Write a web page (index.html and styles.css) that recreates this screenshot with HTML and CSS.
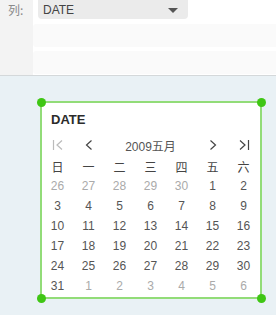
FILE: index.html
```html
<!DOCTYPE html>
<html>
<head>
<meta charset="utf-8">
<link rel="stylesheet" href="styles.css">
</head>
<body>
<div class="top">
  <div class="side"><span class="label">列:</span></div>
  <div class="main">
    <div class="select"><span>DATE</span><span class="caret"></span></div>
    <div class="row"></div>
    <div class="row"></div>
  </div>
</div>
<div class="canvas">
  <div class="card">
    <span class="dot tl"></span><span class="dot tr"></span><span class="dot bl"></span><span class="dot br"></span>
    <div class="title">DATE</div>
    <div class="grid">
      <div class="nav dis"><svg width="12" height="12" viewBox="0 0 12 12"><path d="M1.5 1v10M10 1.5L5 6l5 4.5" fill="none" stroke="currentColor" stroke-width="1.2"/></svg></div>
      <div class="nav"><svg width="12" height="12" viewBox="0 0 12 12"><path d="M8.5 1.5L3.5 6l5 4.5" fill="none" stroke="currentColor" stroke-width="1.2"/></svg></div>
      <div class="month">2009五月</div>
      <div class="nav"><svg width="12" height="12" viewBox="0 0 12 12"><path d="M3.5 1.5L8.5 6l-5 4.5" fill="none" stroke="currentColor" stroke-width="1.2"/></svg></div>
      <div class="nav"><svg width="12" height="12" viewBox="0 0 12 12"><path d="M2 1.5L7 6l-5 4.5M10.5 1v10" fill="none" stroke="currentColor" stroke-width="1.2"/></svg></div>
      <div class="wd">日</div><div class="wd">一</div><div class="wd">二</div><div class="wd">三</div><div class="wd">四</div><div class="wd">五</div><div class="wd">六</div>
      <div class="d o">26</div><div class="d o">27</div><div class="d o">28</div><div class="d o">29</div><div class="d o">30</div><div class="d">1</div><div class="d">2</div>
      <div class="d">3</div><div class="d">4</div><div class="d">5</div><div class="d">6</div><div class="d">7</div><div class="d">8</div><div class="d">9</div>
      <div class="d">10</div><div class="d">11</div><div class="d">12</div><div class="d">13</div><div class="d">14</div><div class="d">15</div><div class="d">16</div>
      <div class="d">17</div><div class="d">18</div><div class="d">19</div><div class="d">20</div><div class="d">21</div><div class="d">22</div><div class="d">23</div>
      <div class="d">24</div><div class="d">25</div><div class="d">26</div><div class="d">27</div><div class="d">28</div><div class="d">29</div><div class="d">30</div>
      <div class="d">31</div><div class="d o">1</div><div class="d o">2</div><div class="d o">3</div><div class="d o">4</div><div class="d o">5</div><div class="d o">6</div>
    </div>
  </div>
</div>
</body>
</html>
```
FILE: styles.css
```css
html, body {
  margin: 0;
  padding: 0;
  height: 100%;
}
body {
  font-family: "Liberation Sans", Arial, "Noto Sans CJK SC", sans-serif;
  background: #e9f1f5;
  overflow: hidden;
}
.top {
  display: flex;
  height: 75px;
  border-bottom: 1px solid #d4d8da;
  background: #ffffff;
}
.side {
  width: 33px;
  background: #f3f3f3;
  flex: none;
}
.label {
  display: block;
  padding: 2px 0 0 8px;
  font-size: 12px;
  line-height: 15px;
  color: #8a8a8a;
  font-family: "Noto Sans CJK SC", sans-serif;
}
.main {
  flex: 1;
  display: flex;
  flex-direction: column;
}
.select {
  margin-left: 5px;
  width: 150px;
  height: 19px;
  box-sizing: border-box;
  background: #ebebeb;
  border-radius: 0 0 4px 4px;
  display: flex;
  align-items: center;
  justify-content: space-between;
  padding: 0 10px 0 5px;
  font-size: 12px;
  color: #444;
}
.caret {
  width: 0;
  height: 0;
  border-left: 5.5px solid transparent;
  border-right: 5.5px solid transparent;
  border-top: 5px solid #555;
  margin-top: 1px;
}
.row {
  height: 23px;
  background: #fafafa;
  border-radius: 3px 0 0 3px;
  margin-top: 5px;
}
.row + .row {
  margin-top: 4px;
}
.canvas {
  padding: 25px 0 0 40px;
}
.card {
  position: relative;
  width: 218px;
  height: 194px;
  background: #ffffff;
  border: 2px solid #92dc78;
}
.dot {
  position: absolute;
  width: 9px;
  height: 9px;
  border-radius: 50%;
  background: #3fc614;
}
.tl { left: -5.5px; top: -5.5px; }
.tr { right: -5.5px; top: -5.5px; }
.bl { left: -5.5px; bottom: -5.5px; }
.br { right: -5.5px; bottom: -5.5px; }
.title {
  padding: 9px 0 0 9px;
  font-size: 13px;
  line-height: 16px;
  font-weight: bold;
  color: #2b2b2b;
}
.grid {
  margin-top: 7px;
  display: grid;
  grid-template-columns: repeat(7, 31px);
  grid-auto-rows: 20px;
  font-size: 12px;
  color: #555;
}
.nav {
  display: flex;
  align-items: center;
  justify-content: center;
  color: #444;
}
.nav.dis {
  color: #bbb;
}
.month {
  grid-column: span 3;
  display: flex;
  align-items: center;
  justify-content: center;
  color: #555;
  font-family: "Liberation Sans", "Noto Sans CJK SC", sans-serif;
}
.wd {
  display: flex;
  align-items: center;
  justify-content: center;
  margin-top: 2px;
  font-family: "Noto Sans CJK SC", sans-serif;
  color: #444;
}
.d {
  display: flex;
  align-items: center;
  justify-content: center;
  margin-top: 2px;
}
.d.o {
  color: #aaa;
}
```
